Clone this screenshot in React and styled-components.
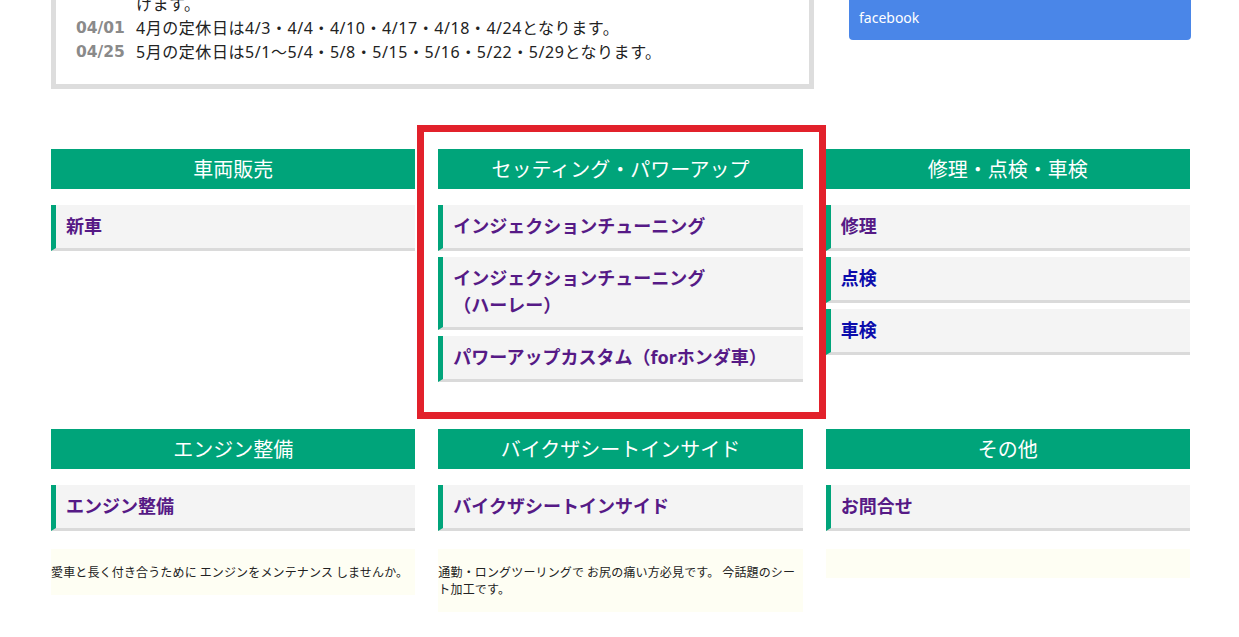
import React from "react";
import styled, { createGlobalStyle } from "styled-components";

const GlobalStyle = createGlobalStyle`
  html, body {
    margin: 0;
    padding: 0;
    background: #ffffff;
    overflow: hidden;
  }
  body {
    font-family: "Noto Sans", "Noto Sans CJK JP", sans-serif;
    color: #222;
  }
  * { box-sizing: border-box; }
`;

const Page = styled.div`
  width: 1140px;
  margin: 0 0 0 51px;
`;

const TopRow = styled.div`
  display: flex;
  align-items: flex-start;
  gap: 35px;
  margin-top: -33px;
`;

const NewsBox = styled.div`
  width: 763px;
  border: 5px solid #dddddd;
  padding: 20px 20px 20px 20px;
`;

const NewsRow = styled.div`
  display: grid;
  grid-template-columns: 60px 1fr;
  font-size: 16px;
  line-height: 24px;
  color: #222;
`;

const NewsDate = styled.span`
  font-family: "DejaVu Sans", "Noto Sans", sans-serif;
  font-weight: bold;
  font-size: 15.5px;
  color: #8a8a8a;
`;

const NewsText = styled.span`
  font-family: "Noto Sans", "Noto Sans CJK JP", sans-serif;
  letter-spacing: 0.55px;
`;

const FacebookButton = styled.a`
  display: flex;
  align-items: flex-end;
  width: 342px;
  height: 73px;
  padding: 0 10px 12px;
  background: #4a86e8;
  border-radius: 0 0 4px 4px;
  color: #ffffff;
  font-size: 14px;
  line-height: 20px;
  text-decoration: none;
`;

const Sections = styled.div`
  display: grid;
  grid-template-columns: repeat(3, 1fr);
  column-gap: 23px;
  row-gap: 47px;
  margin-top: 60px;
  width: 1139px;
`;

const Column = styled.div`
  position: relative;
  display: flex;
  flex-direction: column;
`;

const Heading = styled.h2`
  margin: 0 0 16px;
  height: 40px;
  background: #00a47a;
  color: #ffffff;
  font-size: 20px;
  font-weight: normal;
  line-height: 40px;
  text-align: center;
  font-family: "Noto Sans CJK JP", sans-serif;
`;

const ItemList = styled.ul`
  list-style: none;
  margin: 0;
  padding: 0;
  display: flex;
  flex-direction: column;
  gap: 6px;
`;

const Item = styled.li`
  background: #f4f4f4;
  border-left: 5px solid #00a47a;
  border-bottom: 3px solid #dadada;
  padding: 8px 12px 8px 10px;
`;

const ItemLink = styled.a`
  display: block;
  font-family: "Noto Sans", "Noto Sans CJK JP", sans-serif;
  font-size: 18px;
  font-weight: bold;
  line-height: 27px;
  text-decoration: none;
  color: ${(p) => (p.$fresh ? "#0c0cac" : "#561a86")};
`;

const Desc = styled.div`
  margin-top: 18px;
  background: #fefef3;
  padding: 14px 0 15px;
  font-size: 12px;
  line-height: 17px;
  letter-spacing: 0.15px;
  color: #222;
  font-family: "Noto Sans CJK JP", sans-serif;
`;

const Highlight = styled.div`
  position: absolute;
  top: -24px;
  left: -21px;
  right: -23px;
  bottom: -37px;
  border: 7px solid #e2212b;
  pointer-events: none;
`;

const sections = [
  {
    title: "車両販売",
    items: [{ label: "新車" }],
  },
  {
    title: "セッティング・パワーアップ",
    highlight: true,
    items: [
      { label: "インジェクションチューニング" },
      { label: "インジェクションチューニング\n（ハーレー）" },
      { label: "パワーアップカスタム（forホンダ車）" },
    ],
  },
  {
    title: "修理・点検・車検",
    items: [
      { label: "修理" },
      { label: "点検", fresh: true },
      { label: "車検", fresh: true },
    ],
  },
  {
    title: "エンジン整備",
    items: [{ label: "エンジン整備" }],
    desc: "愛車と長く付き合うために エンジンをメンテナンス しませんか。",
  },
  {
    title: "バイクザシートインサイド",
    items: [{ label: "バイクザシートインサイド" }],
    desc: "通勤・ロングツーリングで お尻の痛い方必見です。 今話題のシート加工です。",
  },
  {
    title: "その他",
    items: [{ label: "お問合せ" }],
    desc: "",
  },
];

export default function App() {
  return (
    <>
      <GlobalStyle />
      <Page>
        <TopRow>
          <NewsBox>
            <NewsRow>
              <span />
              <NewsText>けます。</NewsText>
            </NewsRow>
            <NewsRow>
              <NewsDate>04/01</NewsDate>
              <NewsText>4月の定休日は4/3・4/4・4/10・4/17・4/18・4/24となります。</NewsText>
            </NewsRow>
            <NewsRow>
              <NewsDate>04/25</NewsDate>
              <NewsText>5月の定休日は5/1～5/4・5/8・5/15・5/16・5/22・5/29となります。</NewsText>
            </NewsRow>
          </NewsBox>
          <FacebookButton href="#">facebook</FacebookButton>
        </TopRow>
        <Sections>
          {sections.map((s) => (
            <Column key={s.title}>
              <Heading>{s.title}</Heading>
              <ItemList>
                {s.items.map((it) => (
                  <Item key={it.label}>
                    <ItemLink href="#" $fresh={it.fresh}>
                      {it.label.split("\n").map((line, i) => (
                        <React.Fragment key={i}>
                          {i > 0 && <br />}
                          {line}
                        </React.Fragment>
                      ))}
                    </ItemLink>
                  </Item>
                ))}
              </ItemList>
              {s.desc !== undefined && <Desc>{s.desc}</Desc>}
              {s.highlight && <Highlight />}
            </Column>
          ))}
        </Sections>
      </Page>
    </>
  );
}
